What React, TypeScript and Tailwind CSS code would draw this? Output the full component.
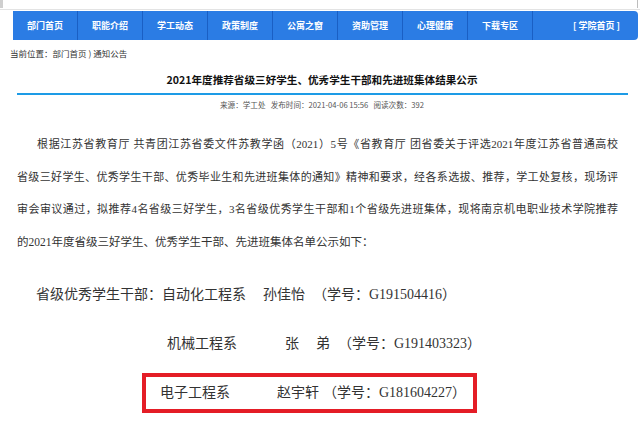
import React from 'react'

const navItems = ['部门首页', '职能介绍', '学工动态', '政策制度', '公寓之窗', '资助管理', '心理健康', '下载专区']

const SANS = "font-['Noto_Sans_CJK_SC',sans-serif]"
const SERIF = "font-['Liberation_Serif','Noto_Sans_CJK_SC',serif]"

const App: React.FC = () => {
  return (
    <div className="w-[640px] h-[426px] bg-white overflow-hidden relative text-[#333]">
      {/* top strip */}
      <div className="h-[10px] border-b border-[#e3e3e3] flex justify-between">
        <div className="w-[3px] h-[8px] bg-[#cfcfcf]" />
        <div className="w-[1px] h-[8px] bg-[#bdbdbd] mr-[2px]" />
      </div>

      {/* nav */}
      <div className={`ml-[13px] mt-[1px] w-[625px] h-[29px] bg-[#2b7ce4] rounded-r-[4px] flex ${SANS}`}>
        {navItems.map((item) => (
          <div
            key={item}
            className="w-[65px] h-full flex items-center justify-center border-r border-[#1a5fc4] text-white text-[9px] font-bold"
          >
            {item}
          </div>
        ))}
        <div className="flex-1 flex items-center justify-end pr-[18px] text-white text-[9px] font-bold">
          [ 学院首页 ]
        </div>
      </div>

      {/* breadcrumb */}
      <div className={`ml-[10px] mt-[7px] h-[12px] leading-[12px] text-[8.5px] text-[#333] ${SANS}`}>
        当前位置：部门首页 ) 通知公告
      </div>

      {/* title */}
      <div className={`mt-[14px] h-[14px] leading-[14px] text-center text-[10.6px] font-bold text-[#111] pl-[4px] ${SANS}`}>
        2021年度推荐省级三好学生、优秀学生干部和先进班集体结果公示
      </div>
      <div className="ml-[17px] mt-[6px] w-[611px] h-[2px] bg-[#1d9be6]" />

      {/* meta */}
      <div className={`mt-[4px] h-[11px] leading-[11px] text-center text-[7.6px] text-[#555] pl-[4px] ${SANS}`}>
        来源：学工处&nbsp;&nbsp;&nbsp;发布时间：2021-04-06 15:56&nbsp;&nbsp;&nbsp;阅读次数：392
      </div>

      {/* body */}
      <div className={`ml-[17px] mt-[18px] w-[601px] text-[11px] leading-[32.5px] text-[#333] whitespace-nowrap ${SERIF}`}>
        <div className="h-[32.5px] pl-[20px] text-justify [text-align-last:justify]">
          根据江苏省教育厅 共青团江苏省委文件苏教学函（2021）5号《省教育厅 团省委关于评选2021年度江苏省普通高校
        </div>
        <div className="h-[32.5px] text-justify [text-align-last:justify]">
          省级三好学生、优秀学生干部、优秀毕业生和先进班集体的通知》精神和要求，经各系选拔、推荐，学工处复核，现场评
        </div>
        <div className="h-[32.5px] text-justify [text-align-last:justify]">
          审会审议通过，拟推荐4名省级三好学生，3名省级优秀学生干部和1个省级先进班集体，现将南京机电职业技术学院推荐
        </div>
        <div className="h-[32.5px] text-[11.5px]">的2021年度省级三好学生、优秀学生干部、先进班集体名单公示如下：</div>
      </div>

      {/* list */}
      <div className={`mt-[27px] text-[14px] leading-[20px] text-[#333] ${SERIF}`}>
        <div className="flex h-[20px]">
          <span className="ml-[36px] w-[227px]">省级优秀学生干部：自动化工程系</span>
          <span className="w-[50px]">孙佳怡</span>
          <span>（学号：G191504416）</span>
        </div>
        <div className="flex h-[20px] mt-[29px]">
          <span className="ml-[167px] w-[118px]">机械工程系</span>
          <span className="w-[31px]">张</span>
          <span className="w-[22px]">弟</span>
          <span>（学号：G191403323）</span>
        </div>
        <div className="ml-[142px] mt-[19px] w-[335px] h-[40px] border-[4px] border-[#e41d26] flex items-center">
          <span className="ml-[14px] w-[117px]">电子工程系</span>
          <span className="w-[46px]">赵宇轩</span>
          <span>（学号：G181604227）</span>
        </div>
      </div>
    </div>
  )
}

export default App
